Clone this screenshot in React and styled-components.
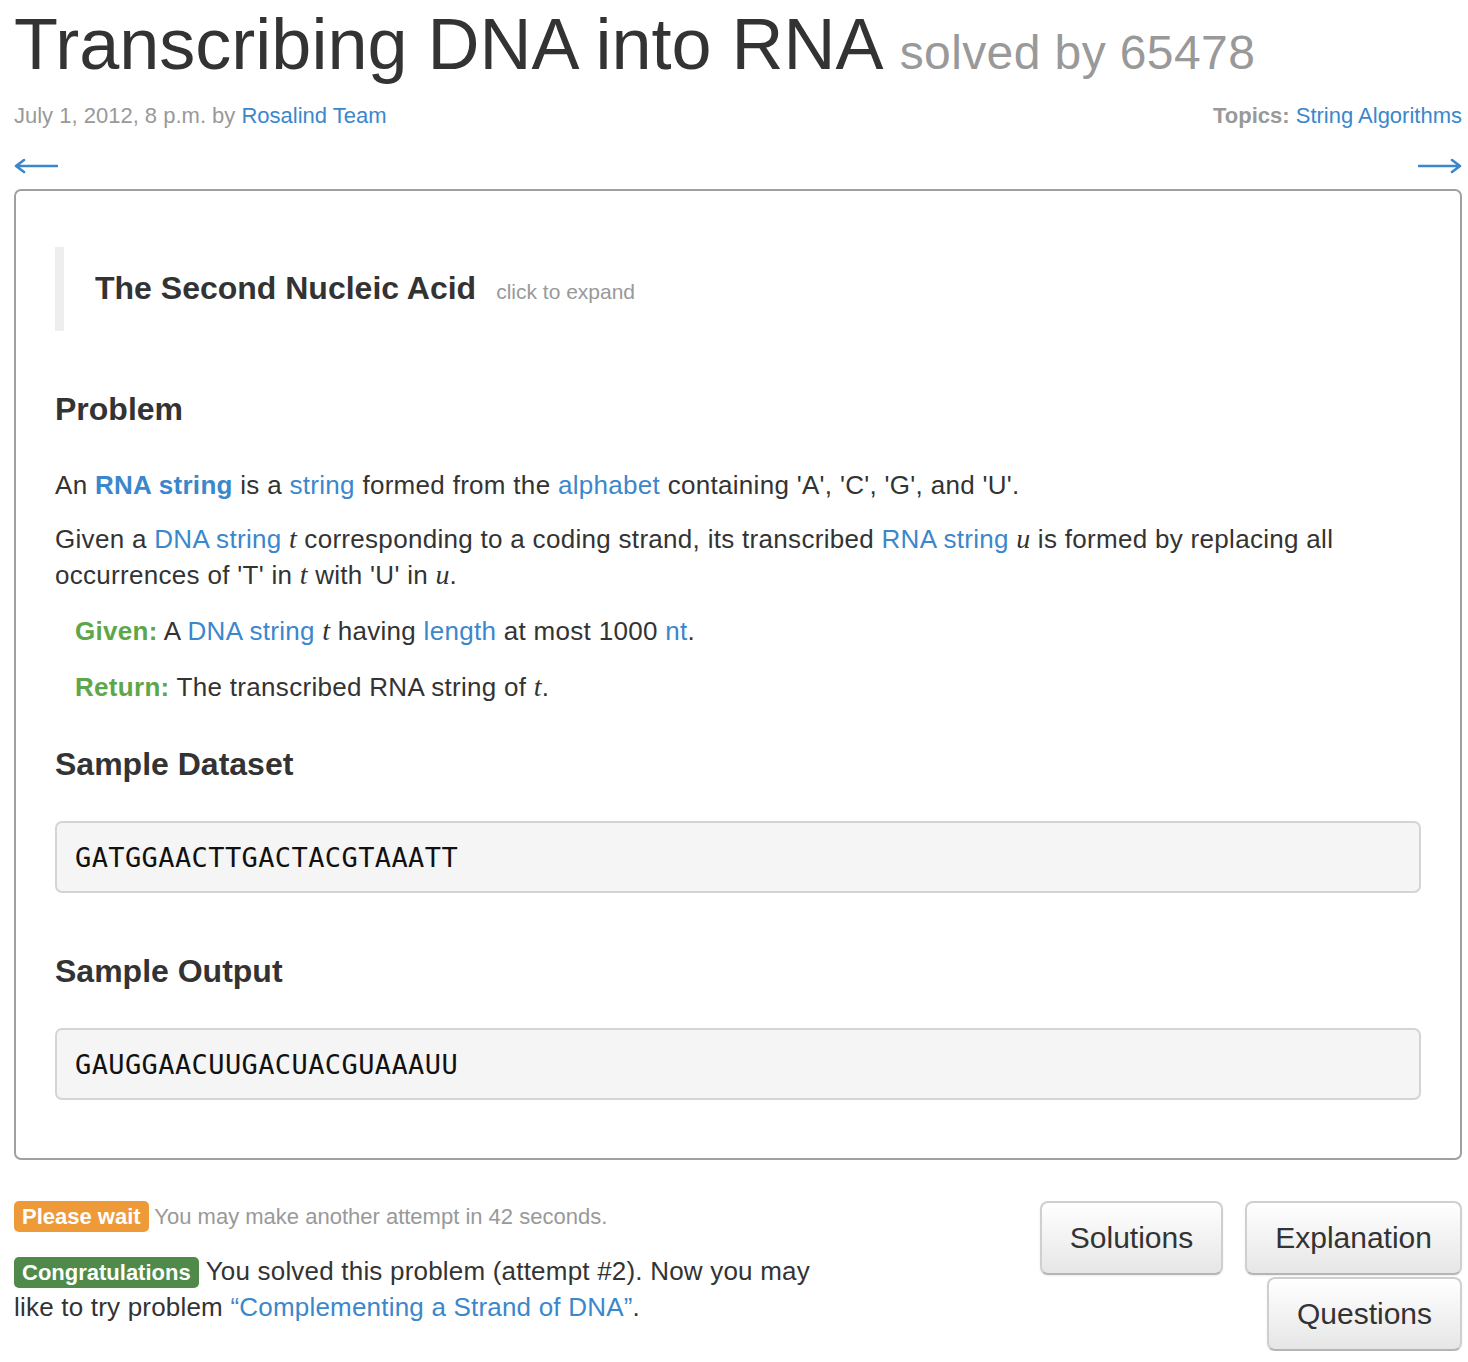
import React from 'react';
import styled, { createGlobalStyle } from 'styled-components';

const GlobalStyle = createGlobalStyle`
  body {
    margin: 0;
    background: #fff;
    font-family: "Liberation Sans", Arial, sans-serif;
    color: #333;
  }
`;

const Arrow = ({ dir }) => (
  <svg width="44" height="16" viewBox="0 0 44 16">
    {dir === 'left' ? (
      <path d="M2 8 H43 M2 8 L10 2 M2 8 L10 14" stroke="#3b87cc" strokeWidth="2.6" fill="none" strokeLinecap="round" />
    ) : (
      <path d="M1 8 H42 M42 8 L34 2 M42 8 L34 14" stroke="#3b87cc" strokeWidth="2.6" fill="none" strokeLinecap="round" />
    )}
  </svg>
);

const App = () => (
  <Page>
    <GlobalStyle />
    <Title>
      Transcribing DNA into RNA <small>solved by 65478</small>
    </Title>
    <Meta>
      <span>
        July 1, 2012, 8 p.m. by <Link href="#">Rosalind Team</Link>
      </span>
      <span>
        <b>Topics:</b> <Link href="#">String Algorithms</Link>
      </span>
    </Meta>
    <Nav>
      <Arrow dir="left" />
      <Arrow dir="right" />
    </Nav>

    <ProblemBox>
      <Story>
        <h3>The Second Nucleic Acid</h3>
        <span>click to expand</span>
      </Story>

      <Heading gap={58}>Problem</Heading>
      <Para>
        An <Link href="#"><b>RNA string</b></Link> is a <Link href="#">string</Link> formed from the{' '}
        <Link href="#">alphabet</Link> containing 'A', 'C', 'G', and 'U'.
      </Para>
      <Para>
        Given a <Link href="#">DNA string</Link> <Var>t</Var> corresponding to a coding strand, its transcribed{' '}
        <Link href="#">RNA string</Link> <Var>u</Var> is formed by replacing all occurrences of 'T' in <Var>t</Var> with
        'U' in <Var>u</Var>.
      </Para>
      <Given>
        <Tag>Given:</Tag> A <Link href="#">DNA string</Link> <Var>t</Var> having <Link href="#">length</Link> at most
        1000 <Link href="#">nt</Link>.
      </Given>
      <Given>
        <Tag>Return:</Tag> The transcribed RNA string of <Var>t</Var>.
      </Given>

      <Heading gap={39}>Sample Dataset</Heading>
      <Sample>GATGGAACTTGACTACGTAAATT</Sample>

      <Heading gap={58}>Sample Output</Heading>
      <Sample>GAUGGAACUUGACUACGUAAAUU</Sample>
    </ProblemBox>

    <Footer>
      <Status>
        <Line muted>
          <Label kind="warning">Please wait</Label> You may make another attempt in 42 seconds.
        </Line>
        <Line>
          <Label kind="success">Congratulations</Label> You solved this problem (attempt #2). Now you may like to try
          problem <Link href="#">“Complementing a Strand of DNA”</Link>.
        </Line>
      </Status>
      <Buttons>
        <ButtonRow>
          <Btn>Solutions</Btn>
          <Btn>Explanation</Btn>
        </ButtonRow>
        <Btn>Questions</Btn>
      </Buttons>
    </Footer>
  </Page>
);

const Page = styled.div`
  padding: 0 6px 0 14px;
`;

const Title = styled.h1`
  margin: 0;
  padding-top: 4px;
  font-size: 72px;
  font-weight: normal;
  line-height: 80px;
  color: #333;

  small {
    font-size: 48px;
    letter-spacing: 0.4px;
    color: #999;
  }
`;

const Meta = styled.div`
  display: flex;
  justify-content: space-between;
  margin-top: 8px;
  font-size: 22px;
  line-height: 30px;
  color: #999;

  b {
    font-weight: bold;
  }
`;

const Link = styled.a`
  color: #3b87cc;
  text-decoration: none;
`;

const Nav = styled.div`
  display: flex;
  justify-content: space-between;
  margin-top: 27px;
  height: 16px;
`;

const ProblemBox = styled.div`
  margin-top: 15px;
  border: 2px solid #a0a0a0;
  border-radius: 7px;
  padding: 56px 39px 58px;
`;

const Story = styled.div`
  display: flex;
  align-items: baseline;
  gap: 20px;
  border-left: 9px solid #eee;
  padding: 22px 0 24px 31px;

  h3 {
    margin: 0;
    font-size: 32px;
    line-height: 38px;
    font-weight: bold;
    color: #333;
  }

  span {
    font-size: 21px;
    color: #999;
  }
`;

const Heading = styled.h2`
  margin: ${(p) => p.gap}px 0 0;
  font-size: 32px;
  line-height: 40px;
  font-weight: bold;
  color: #333;
`;

const Para = styled.p`
  margin: 0;
  padding-top: 38px;
  font-size: 26px;
  letter-spacing: 0.3px;
  line-height: 36px;

  & + & {
    padding-top: 18px;
  }
`;

const Var = styled.i`
  font-family: "Liberation Serif", "Times New Roman", serif;
  font-size: 28px;
  letter-spacing: 0;
`;

const Given = styled.p`
  margin: 20px 0 0 20px;
  font-size: 26px;
  letter-spacing: 0.3px;
  line-height: 36px;
`;

const Tag = styled.b`
  color: #5ea64a;
`;

const Sample = styled.div`
  margin-top: 37px;
  background: #f5f5f5;
  border: 2px solid #d4d4d4;
  border-radius: 7px;
  padding: 0 18px;
  height: 68px;
  display: flex;
  align-items: center;
  font-family: "DejaVu Sans Mono", "Liberation Mono", monospace;
  font-size: 27px;
  letter-spacing: 0.4px;
  color: #111;
`;

const Footer = styled.div`
  display: flex;
  justify-content: space-between;
  align-items: flex-start;
  margin-top: 41px;
`;

const Status = styled.div`
  width: 800px;
`;

const Line = styled.p`
  margin: 0 0 20px;
  font-size: ${(p) => (p.muted ? '22px' : '26px')};
  letter-spacing: ${(p) => (p.muted ? '0' : '0.2px')};
  line-height: ${(p) => (p.muted ? '32px' : '36px')};
  color: ${(p) => (p.muted ? '#999' : '#333')};
`;

const Label = styled.span`
  display: inline-block;
  padding: 0 8px;
  border-radius: 5px;
  font-size: 22px;
  letter-spacing: 0;
  line-height: 31px;
  font-weight: bold;
  color: #fff;
  background: ${(p) => (p.kind === 'warning' ? '#ef9a38' : '#4f8a4a')};
  vertical-align: baseline;
`;

const Buttons = styled.div`
  display: flex;
  flex-direction: column;
  align-items: flex-end;
  gap: 2px;
`;

const ButtonRow = styled.div`
  display: flex;
  gap: 22px;
`;

const Btn = styled.button`
  height: 74px;
  padding: 0 28px;
  font-family: "Liberation Sans", Arial, sans-serif;
  font-size: 30px;
  color: #333;
  background: linear-gradient(#fff, #e6e6e6);
  border: 2px solid #cfcfcf;
  border-bottom-color: #b5b5b5;
  border-radius: 8px;
  box-shadow: inset 0 1px 0 rgba(255, 255, 255, 0.3), 0 1px 2px rgba(0, 0, 0, 0.08);
`;

export default App;
